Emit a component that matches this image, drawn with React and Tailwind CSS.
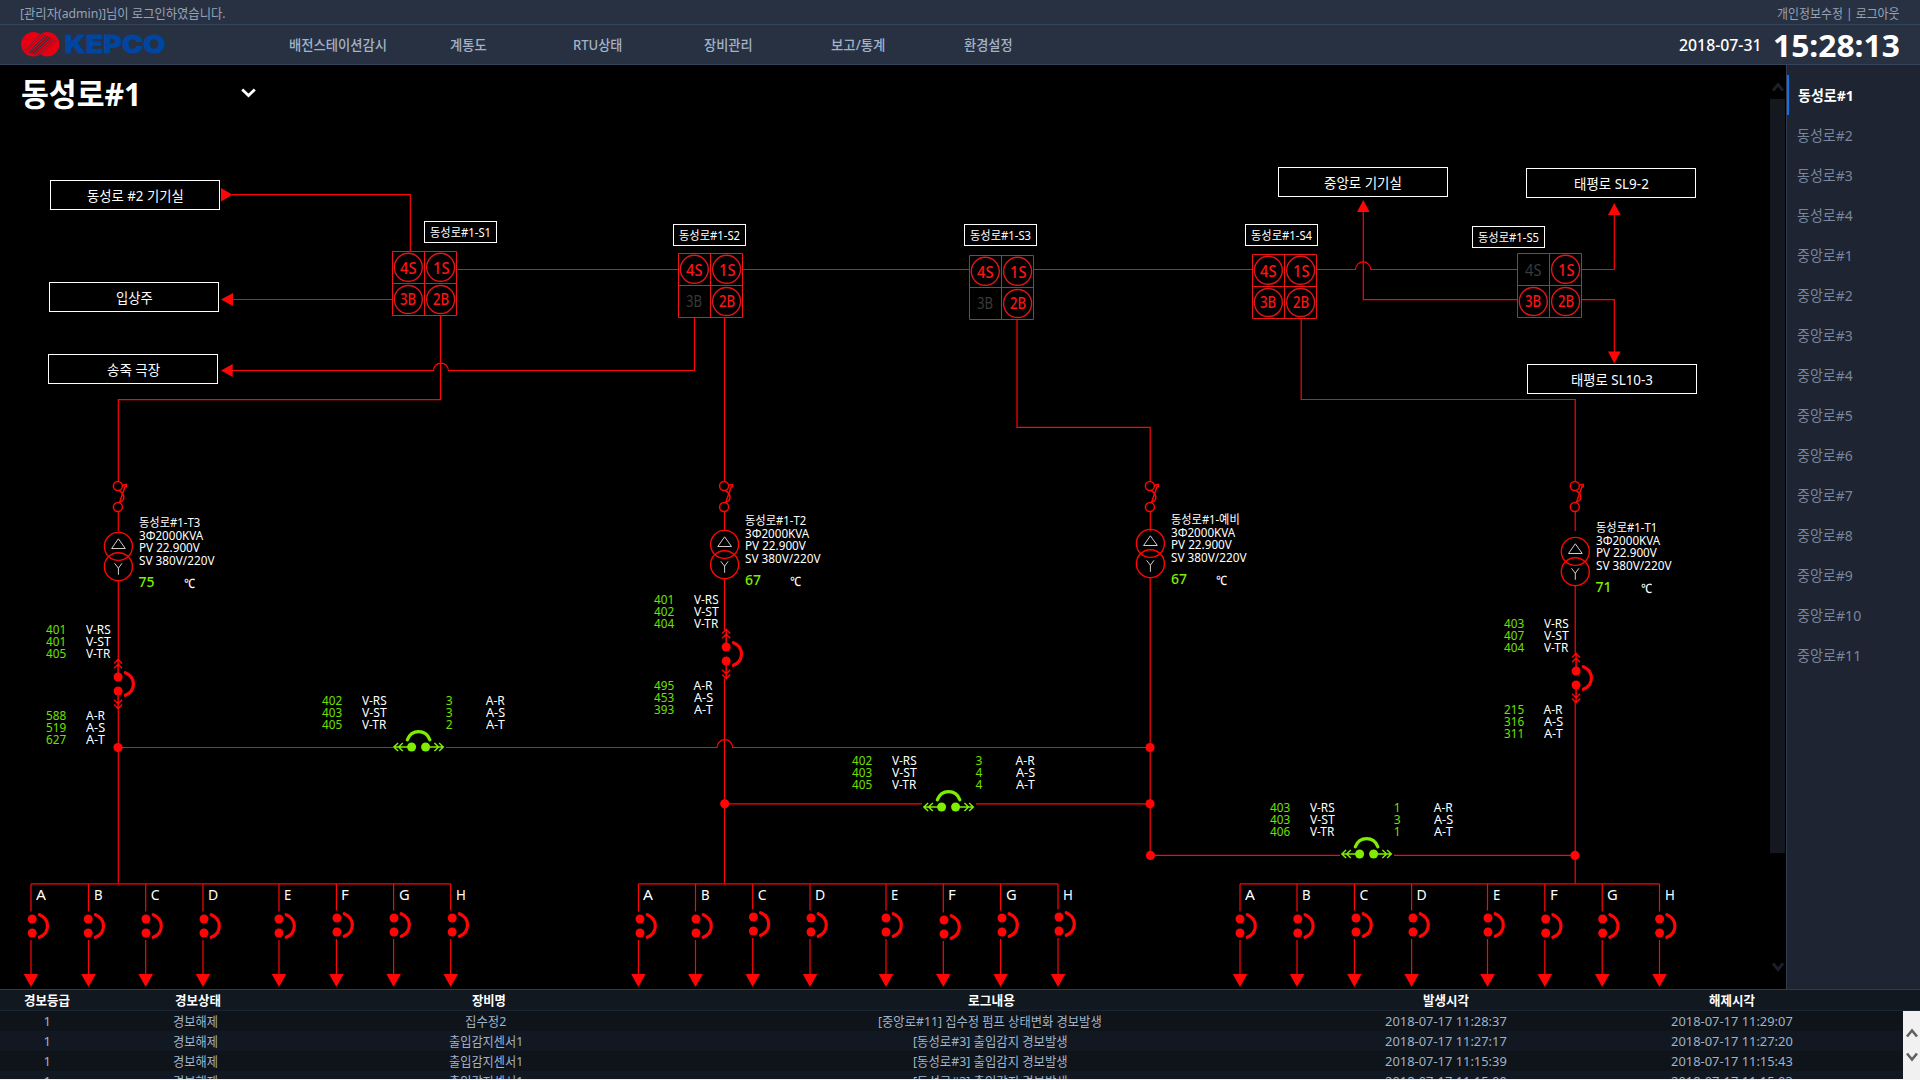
import { useLayoutEffect, useRef, useState } from "react";

const RED = "#ff0505";
const GREEN = "#7fee00";
const MAIN_TOP = 65;

/* Text squeezed or stretched horizontally to a given width. */
function Fit({ w, className = "", children }) {
  const ref = useRef(null);
  const [scale, setScale] = useState(1);
  useLayoutEffect(() => {
    const natural = ref.current.offsetWidth;
    if (natural > 0) setScale(w / natural);
  }, [w, children]);
  return (
    <span className={`block shrink-0 whitespace-nowrap text-left ${className}`} style={{ width: w }}>
      <span ref={ref} className="inline-block origin-left" style={{ transform: `scaleX(${scale})` }}>
        {children}
      </span>
    </span>
  );
}

/* A label on the diagram; y is the vertical centre of the text. */
function Label({ x, y, w, className = "text-xs text-white", children }) {
  return (
    <div className="absolute -translate-y-1/2 leading-3" style={{ left: x, top: y - MAIN_TOP }}>
      <Fit w={w} className={`leading-3! ${className}`}>{children}</Fit>
    </div>
  );
}

function Box({ x, y, w, h, textW, className = "text-sm", children }) {
  return (
    <div
      className="absolute flex items-center justify-center border border-white bg-black pt-px text-white"
      style={{ left: x, top: y - MAIN_TOP, width: w, height: h }}
    >
      <Fit w={textW} className={`leading-4! ${className}`}>{children}</Fit>
    </div>
  );
}

const places = [
  { x: 50, y: 180, w: 97, t: "동성로 #2 기기실" },
  { x: 49, y: 282, w: 37, t: "입상주" },
  { x: 48, y: 354, w: 53, t: "송죽 극장" },
  { x: 1278, y: 167, w: 78, t: "중앙로 기기실" },
  { x: 1526, y: 168, w: 75, t: "태평로 SL9-2" },
  { x: 1527, y: 364, w: 82, t: "태평로 SL10-3" },
];

const switches = [
  { name: "동성로#1-S1", lx: 424, ly: 221, x: 392, y: 251 },
  { name: "동성로#1-S2", lx: 673, ly: 224, x: 678, y: 253, off: "3B" },
  { name: "동성로#1-S3", lx: 964, ly: 224, x: 969, y: 255, off: "3B" },
  { name: "동성로#1-S4", lx: 1245, ly: 224, x: 1252, y: 254 },
  { name: "동성로#1-S5", lx: 1472, ly: 226, x: 1517, y: 253, off: "4S" },
];

const transformers = [
  { name: "동성로#1-T3", x: 118.3, dy: 0, lx: 138.5, temp: "75", nw: 61 },
  { name: "동성로#1-T2", x: 724.5, dy: -2, lx: 745, temp: "67", nw: 61 },
  { name: "동성로#1-예비", x: 1150.3, dy: -3, lx: 1171, temp: "67", nw: 69 },
  { name: "동성로#1-T1", x: 1575.2, dy: 5, lx: 1595.5, temp: "71", nw: 61 },
];

const V = ["V-RS", "V-ST", "V-TR"];
const A = ["A-R", "A-S", "A-T"];
const readings = [
  { x: 46, y: 629.5, vals: ["401", "401", "405"], names: V },
  { x: 46, y: 715.5, vals: ["588", "519", "627"], names: A },
  { x: 653.5, y: 599.5, vals: ["401", "402", "404"], names: V },
  { x: 653.5, y: 685.5, vals: ["495", "453", "393"], names: A },
  { x: 1503.5, y: 623.5, vals: ["403", "407", "404"], names: V },
  { x: 1503.5, y: 709.5, vals: ["215", "316", "311"], names: A },
  { x: 321.8, y: 700.5, vals: ["402", "403", "405"], names: V },
  { x: 445.8, y: 700.5, vals: ["3", "3", "2"], names: A },
  { x: 851.8, y: 760.5, vals: ["402", "403", "405"], names: V },
  { x: 975.6, y: 760.5, vals: ["3", "4", "4"], names: A },
  { x: 1269.5, y: 807.5, vals: ["403", "403", "406"], names: V },
  { x: 1393.8, y: 807.5, vals: ["1", "3", "1"], names: A },
];

/* Feeder groups: line x, breaker x, y of the upper contact. */
const feeders = [
  [[31, 32.2, 919], [88.5, 88.2, 919], [145.7, 146, 919], [203, 204, 919], [279, 279, 919], [336.4, 337, 918], [393.6, 394, 918], [450.7, 452.2, 918]],
  [[638.4, 640, 919], [695.5, 696, 919], [752.7, 753.4, 917], [810, 811, 918], [886, 886, 918], [943.3, 944, 920], [1000.6, 1002, 918], [1058, 1059, 917]],
  [[1240, 1240, 919], [1297, 1297.8, 919], [1354.4, 1356, 918], [1411.6, 1413, 918], [1487.5, 1488, 918], [1544.8, 1545.7, 919], [1602.2, 1602.7, 919], [1659.5, 1659.6, 919]],
];
const letters = "ABCDEFGH".split("");
const letterW = [10, 8.5, 9, 10, 7.5, 7.5, 10.5, 9.5];

/* Closed contact pair with its arc; origin midway between the contacts. */
function Contact() {
  return (
    <g>
      <circle cx="0" cy="-7" r="4.5" fill="currentColor" />
      <circle cx="0" cy="7" r="4.5" fill="currentColor" />
      <path d="M7.2 -11.3C18 -7 18 7 7.2 11.3" fill="none" stroke="currentColor" strokeWidth="3.2" strokeLinecap="round" />
    </g>
  );
}

function Breaker() {
  return (
    <g>
      <Contact />
      <path
        d="M0 -24.5V-10M-4 -20.5L0 -24.7L4 -20.5M-4 -15.8L0 -20L4 -15.8M0 24.5V10M-4 20.5L0 24.7L4 20.5M-4 15.8L0 20L4 15.8"
        fill="none"
        stroke="currentColor"
        strokeWidth="1.5"
      />
    </g>
  );
}

function Fuse({ x }) {
  return (
    <g transform={`translate(${x} 0)`} fill="none" stroke={RED} strokeWidth="1.5">
      <circle cx="-0.4" cy="486" r="4.5" />
      <circle cx="-0.4" cy="507" r="4.5" />
      <path d="M0.8 490.5C6.500 494 7.500 500 1.2 502.4" />
      <path d="M1.2 502.4L7 486M4 485.2L8 484.4L8 487.500" />
      <path d="M0 512V531" strokeWidth="1.2" />
    </g>
  );
}

function Transformer({ x, dy }) {
  return (
    <g transform={`translate(${x} ${dy})`} fill="none">
      <circle cx="0.1" cy="546.4" r="14" stroke={RED} strokeWidth="1.4" />
      <circle cx="0.1" cy="566.7" r="14" stroke={RED} strokeWidth="1.4" />
      <path d="M-6.7 548.5H7L0.1 538.8ZM-3.7 563.3L0.1 568.2L3.7 563.3M0.1 568V574.8" stroke="#cfcfcf" strokeWidth="1" />
    </g>
  );
}

function Schematic() {
  return (
    <svg className="block" width="1786" height="924" viewBox="0 65 1786 924">
      <g fill="none" stroke={RED} strokeWidth="1.2">
        <path d="M232 194.7H410.3V251" />
        <path d="M232 299.5H392" />
        <path d="M232 370.5H433.5A7.4 7.4 0 0 1 448.4 370.5H694.5V318" />
        <path d="M440.5 316V399.6H118.3V481" />
        <path d="M457 269.5H678M743 269.5H969M1034 269.5H1252" />
        <path d="M1317 269.5H1355.5A7.6 7.6 0 0 1 1370.7 269.5H1517" />
        <path d="M1363.3 211V299.6H1517" />
        <path d="M1614.3 214V269.5H1582M1582 299.6H1614.3V352" />
        <path d="M724.5 318V481" />
        <path d="M1017 320V427.4H1150.2V481" />
        <path d="M1301.2 319V399.5H1575.2V481" />
        <path d="M118.3 581V660M118.3 708V883.8" />
        <path d="M724.5 579V630M724.5 678.5V883.8" />
        <path d="M1150.2 578V855.4" />
        <path d="M1575.2 586V654M1575.2 702V883.8" />
        <path d="M118 747.5H393M446 747.5H717A7.8 7.8 0 0 1 732.6 747.5H1150" />
        <path d="M724.5 803.8H922M976 803.8H1150" />
        <path d="M1150.5 855.4H1340M1394 855.4H1575" />
      </g>
      <g fill={RED}>
        <path d="M232.5 194.7L221 188V201.5Z" />
        <path d="M221 299.5L233 293V306Z" />
        <path d="M221 370.5L232.7 364V377Z" />
        <path d="M1363.3 200L1357 212H1369.6Z" />
        <path d="M1614.3 203L1608 215H1620.7Z" />
        <path d="M1614.3 363.5L1608 351.5H1620.7Z" />
        {[[118, 747.5], [1150, 747.5], [724.7, 803.8], [1150, 803.8], [1150.5, 855.4], [1575, 855.4]].map(([x, y], i) => (
          <circle key={i} cx={x} cy={y} r="4.6" />
        ))}
      </g>

      {switches.map((s) => (
        <g key={s.name} transform={`translate(${s.x} ${s.y})`} fill="none" stroke="#f01414">
          <path d="M0.5 0.5H64.5V64.5H0.5ZM32.5 0.5V64.5M0.5 32.5H64.5" />
          {[["4S", 16.3, 16.3], ["1S", 48.6, 16.3], ["3B", 16.3, 48.5], ["2B", 48.6, 48.5]]
            .filter(([k]) => k !== s.off)
            .map(([k, cx, cy]) => (
              <circle key={k} cx={cx} cy={cy} r="14" stroke="#e01515" strokeWidth="1.4" />
            ))}
        </g>
      ))}

      {transformers.map((t) => (
        <g key={t.name}>
          <Fuse x={t.x} />
          <Transformer x={t.x} dy={t.dy} />
        </g>
      ))}

      {[[118.1, 684], [726.2, 654], [1576.1, 678]].map(([x, y]) => (
        <g key={x} color={RED} transform={`translate(${x} ${y})`}><Breaker /></g>
      ))}
      {[[418.6, 747], [948.6, 807], [1366.6, 854]].map(([x, y]) => (
        <g key={x} color={GREEN} transform={`translate(${x} ${y}) rotate(-90)`}><Breaker /></g>
      ))}

      {feeders.map((group, gi) => (
        <g key={gi} color={RED} stroke={RED} strokeWidth="1.2">
          <path d={`M${group[0][0]} 883.9H${group[7][0]}`} fill="none" strokeWidth="1.4" />
          {group.map(([x, bx, y]) => (
            <g key={x}>
              <path d={`M${x} 884V${y - 7.5}M${x} ${y + 21}V975`} />
              <path d={`M${x - 7.3} 974H${x + 7.3}L${x} 987Z`} fill={RED} stroke="none" />
              <g stroke="none" transform={`translate(${bx} ${y + 7})`}><Contact /></g>
            </g>
          ))}
        </g>
      ))}
    </svg>
  );
}

function Diagram() {
  return (
    <div className="relative h-[924px] w-[1786px] bg-black">
      <Schematic />
      {places.map((p) => (
        <Box key={p.t} x={p.x} y={p.y} w={170} h={30} textW={p.w}>{p.t}</Box>
      ))}
      {switches.map((s) => (
        <div key={s.name}>
          <Box x={s.lx} y={s.ly} w={73} h={22} textW={61} className="text-xs">{s.name}</Box>
          {[["4S", 0, 0], ["1S", 1, 0], ["3B", 0, 1], ["2B", 1, 1]].map(([k, cx, cy]) => (
            <Label
              key={k}
              x={s.x + 8.3 + cx * 32.2}
              y={s.y + 16.5 + cy * 31.3}
              w={16.5}
              className={k === s.off ? "text-base text-[#3a3a3a]" : "text-base font-medium text-[#ff1414]"}
            >
              {k}
            </Label>
          ))}
        </div>
      ))}
      {transformers.map((t) => (
        <div key={t.name}>
          <Label x={t.lx} y={522.8 + t.dy} w={t.nw}>{t.name}</Label>
          <Label x={t.lx} y={535.5 + t.dy} w={64}>3Φ2000KVA</Label>
          <Label x={t.lx} y={547.5 + t.dy} w={60.5}>PV 22.900V</Label>
          <Label x={t.lx} y={560.5 + t.dy} w={75.5}>SV 380V/220V</Label>
          <Label x={t.lx} y={582 + t.dy} w={16} className="text-sm font-medium text-[#7fee00]">{t.temp}</Label>
          <Label x={t.lx + 45} y={583 + t.dy} w={11} className="text-[13px] font-medium text-white">℃</Label>
        </div>
      ))}
      {readings.map((r) => (
        <div key={`${r.x}-${r.y}`}>
          {r.vals.map((v, i) => (
            <Label key={i} x={r.x} y={r.y + i * 12} w={v.length === 3 ? 20.5 : 7} className="text-xs text-[#6fe000]">{v}</Label>
          ))}
          {r.names.map((n, i) => (
            <Label key={n} x={r.x + 40} y={r.y + i * 12} w={n.length === 4 ? 24.5 : 19}>{n}</Label>
          ))}
        </div>
      ))}
      {feeders.map((group, gi) =>
        group.map(([x], i) => (
          <Label key={`${gi}-${i}`} x={x + 5} y={895.3} w={letterW[i]} className="text-sm text-white">{letters[i]}</Label>
        ))
      )}
      <button className="absolute top-[9px] left-[21px] flex h-10 w-[241px] items-center justify-between text-[32px] font-bold text-white">
        <Fit w={120} className="leading-10">동성로#1</Fit>
        <svg className="mr-1.5 mb-0.5" width="15" height="10" viewBox="0 0 15 10" fill="none" stroke="#fff" strokeWidth="2.8">
          <path d="M1.2 1.5L7.5 7.6L13.8 1.5" />
        </svg>
      </button>
      <div className="absolute top-[10px] right-px flex h-[906px] w-[15px] flex-col items-center justify-between">
        <svg className="mt-[7px] h-[10px] w-3 shrink-0" viewBox="0 0 12 10" fill="none" stroke="#1b2129" strokeWidth="2.8">
          <path d="M1 8.5L6 2.5L11 8.5" />
        </svg>
        <div className="mt-[7px] h-[754px] w-full shrink-0 bg-[#14181f]" />
        <svg className="mt-auto mb-[9px] h-[10px] w-3 shrink-0" viewBox="0 0 12 10" fill="none" stroke="#1b2129" strokeWidth="2.8">
          <path d="M1 1.5L6 7.5L11 1.5" />
        </svg>
      </div>
    </div>
  );
}

function Logo() {
  return (
    <svg width="150" height="36" viewBox="18 27 150 36">
      <defs>
        <clipPath id="mark">
          <circle cx="33.3" cy="44.3" r="12.2" />
          <circle cx="47.2" cy="44.3" r="12.2" />
        </clipPath>
      </defs>
      <g clipPath="url(#mark)">
        <rect x="20" y="31" width="41" height="27" fill="#e60012" />
        <g stroke="#283142">
          {[0.35, 0.45, 0.6, 0.75, 0.75, 0.6, 0.45, 0.35].map((sw, i) => (
            <path
              key={i}
              d={`M${24.5 + i * 2} ${50.6 + i * 0.85}L${41.8 + i * 2.1} ${33.2 + i}`}
              strokeWidth={sw * 1.5}
            />
          ))}
        </g>
      </g>
      <text
        x="64.5"
        y="53.3"
        textLength="101"
        lengthAdjust="spacingAndGlyphs"
        fill="#00459f"
        stroke="#00459f"
        strokeWidth="1"
        strokeLinejoin="round"
        className="font-['Inter'] text-[25px] font-extrabold"
      >
        KEPCO
      </text>
    </svg>
  );
}

const menu = [
  ["배전스테이션감시", 98],
  ["계통도", 37],
  ["RTU상태", 49.5],
  ["장비관리", 49],
  ["보고/통계", 54.5],
  ["환경설정", 49],
];

function Header() {
  return (
    <header className="bg-[#283142] text-[#a2b3c8]">
      <div className="flex h-[25px] items-center justify-between border-b border-[#34445a] pt-px pr-5 pl-5 text-[13px] text-[#95a3b6]">
        <Fit w={206} className="leading-5">[관리자(admin)]님이 로그인하였습니다.</Fit>
        <Fit w={123} className="leading-5">개인정보수정 | 로그아웃</Fit>
      </div>
      <div className="flex h-10 items-center border-b border-[#34445a] pr-5">
        <div className="w-[273px] pl-[18px]"><Logo /></div>
        <nav className="grid grid-cols-[repeat(6,130px)] text-sm">
          {menu.map(([t, w]) => (
            <a key={t} className="flex justify-center font-medium"><Fit w={w} className="leading-5">{t}</Fit></a>
          ))}
        </nav>
        <div className="ml-auto flex items-center gap-[11px] text-white">
          <Fit w={83} className="text-base leading-5 font-medium">2018-07-31</Fit>
          <Fit w={127} className="text-[31px] leading-9 font-bold">15:28:13</Fit>
        </div>
      </div>
    </header>
  );
}

const stations = [
  ...[1, 2, 3, 4].map((n) => `동성로#${n}`),
  ...[1, 2, 3, 4, 5, 6, 7, 8, 9, 10, 11].map((n) => `중앙로#${n}`),
];

function Sidebar() {
  return (
    <aside className="w-[134px] border-l border-[#323d4f] bg-[#1e2431] pt-[10px] text-[15px] text-[#78879d]">
      {stations.map((s, i) => (
        <a
          key={s}
          className={
            i === 0
              ? "flex h-10 items-center border-l-2 border-[#1273e0] pl-[9px] font-bold text-white"
              : "flex h-10 items-center border-l-2 border-transparent pl-2"
          }
        >
          <Fit w={s.length === 6 ? 64 : 56} className="leading-5">{s}</Fit>
        </a>
      ))}
    </aside>
  );
}

const heads = [["경보등급", 46], ["경보상태", 46], ["장비명", 34], ["로그내용", 47], ["발생시각", 46], ["해제시각", 46]];
const sensor = ["출입감지센서1", 74];
const intrusion = ["[동성로#3] 출입감지 경보발생", 155];
const logs = [
  [["집수정2", 41], ["[중앙로#11] 집수정 펌프 상태변화 경보발생", 224], "2018-07-17 11:28:37", "2018-07-17 11:29:07"],
  [sensor, intrusion, "2018-07-17 11:27:17", "2018-07-17 11:27:20"],
  [sensor, intrusion, "2018-07-17 11:15:39", "2018-07-17 11:15:43"],
  [sensor, intrusion, "2018-07-17 11:15:00", "2018-07-17 11:15:03"],
];

function Alarms() {
  return (
    <section className="h-[91px] overflow-hidden border-t border-b border-t-[#303a4c] border-b-[#f1f1f1] bg-[#111820] text-[13px]">
      <div className="grid h-[21px] grid-cols-[94px_207px_376px_628px_282px_290px] border-b border-[#1a2433] font-bold text-white">
        {heads.map(([t, w]) => (
          <div key={t} className="flex items-center justify-center"><Fit w={w} className="leading-5">{t}</Fit></div>
        ))}
      </div>
      <div className="flex">
        <div className="w-[1903px]">
          {logs.map(([dev, log, on, off], i) => (
            <div
              key={i}
              className="grid h-5 grid-cols-[94px_203px_377px_632px_280px_292px] bg-[#111822] text-[#a0b4c8] odd:bg-[#0f131a]"
            >
              {[["1", 7], ["경보해제", 45], dev, log, [on, 122], [off, 122]].map(([t, w], k) => (
                <div key={k} className="flex items-center justify-center"><Fit w={w} className="leading-5">{t}</Fit></div>
              ))}
            </div>
          ))}
        </div>
        <div className="flex h-[68px] w-[17px] flex-col items-center gap-[14px] bg-[#f1f1f1] pt-[17px]">
          <svg width="12" height="10" viewBox="0 0 12 10" fill="none" stroke="#606060" strokeWidth="2.6">
            <path d="M1 8.5L6 2.5L11 8.5" />
          </svg>
          <svg width="12" height="10" viewBox="0 0 12 10" fill="none" stroke="#606060" strokeWidth="2.6">
            <path d="M1 1.5L6 7.5L11 1.5" />
          </svg>
        </div>
      </div>
    </section>
  );
}

export default function App() {
  return (
    <div className="h-[1080px] w-[1920px] overflow-hidden bg-black font-['Noto_Sans','Noto_Sans_CJK_KR',sans-serif]">
      <Header />
      <main className="flex h-[924px]">
        <Diagram />
        <Sidebar />
      </main>
      <Alarms />
    </div>
  );
}
